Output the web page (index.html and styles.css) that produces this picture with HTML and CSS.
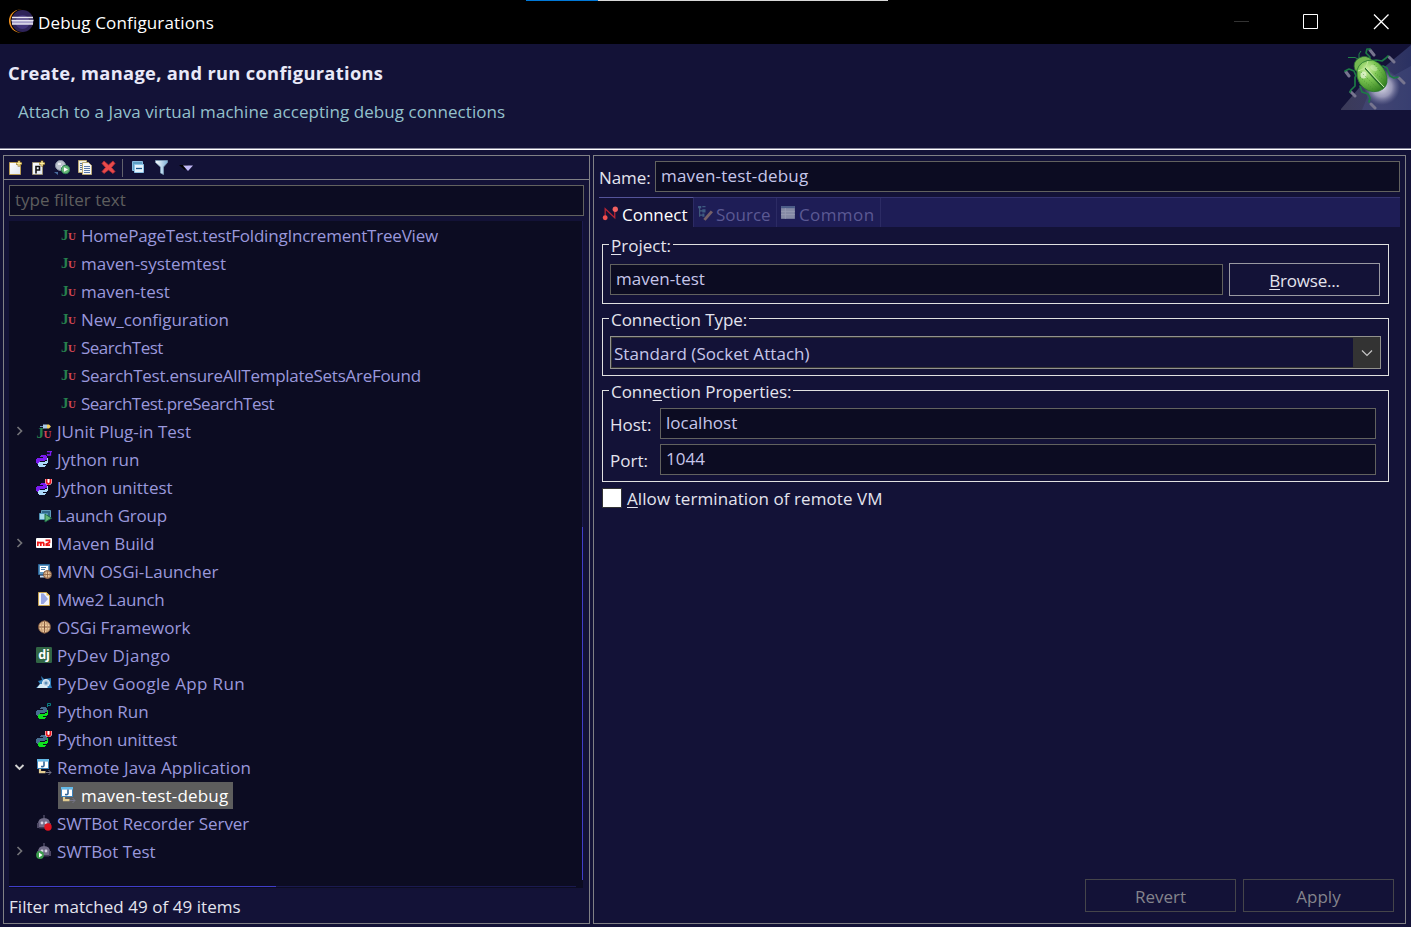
FILE: index.html
```html
<!DOCTYPE html>
<html lang="en">
<head>
<meta charset="utf-8">
<title>Debug Configurations</title>
<link rel="stylesheet" href="styles.css">
</head>
<body>
<svg width="0" height="0" class="defs" aria-hidden="true">
  <defs>
    <radialGradient id="gShell" cx=".35" cy=".3" r=".8"><stop offset="0" stop-color="#d2f2a4"/><stop offset=".4" stop-color="#7cc553"/><stop offset="1" stop-color="#2d7a1c"/></radialGradient>
    <radialGradient id="gGlow"><stop offset="0" stop-color="#dcdce8"/><stop offset=".55" stop-color="#a6a5c2" stop-opacity=".85"/><stop offset="1" stop-color="#7778a0" stop-opacity="0"/></radialGradient>
    <linearGradient id="gBeam" x1="0" x2="1"><stop offset="0" stop-color="#3b3a58"/><stop offset=".5" stop-color="#3a3b64"/><stop offset="1" stop-color="#2a3162"/></linearGradient>
    <linearGradient id="gPage" x2="1" y2="1"><stop offset="0" stop-color="#fff"/><stop offset="1" stop-color="#dfe6f2"/></linearGradient>
    <linearGradient id="gFun" x2="1"><stop offset="0" stop-color="#fff"/><stop offset="1" stop-color="#7fb2d9"/></linearGradient>
  </defs>
  <symbol id="snake" viewBox="0 0 16 16"><path d="M4 5h1V4h5v1h1v4H9v1H4v1H3v2H1v-1H0V8h1V7h6V6H4z" class="s-top"/><path d="M11 7h1v5h-1v1H7v1h3v1H9v1H3v-1H2v-3h1v-1h6v-1h2z" class="s-bot"/></symbol>
  <symbol id="launch" viewBox="0 0 16 16"><path d="M5.500 3.500h9v7h-9z" fill="#2f6688" stroke="#5f9bba"/><path d="M3.500 6.500h8v6h-8z" fill="#a5dced" stroke="#4d91b4"/><path d="M9 7l6.500 4.200L9 15z" fill="#64b878" stroke="#1d6f47"/></symbol>
  <symbol id="m2" viewBox="0 0 16 16"><rect y="3" width="16" height="10" rx="1" fill="#fff"/><path d="M1.800 11V6.500m0 1.100h2.500l.5.800V11m0-2.500.5-.9h2l.5.900V11M9.500 5.300h4v2.200L10.300 9v1.200H14" fill="none" stroke="#f01818" stroke-width="1.700"/></symbol>
  <symbol id="mvn" viewBox="0 0 16 16"><path d="M2.500 1.500h11v10h-11z" fill="#5b94bf" stroke="#296497"/><path d="M4 3h8v6H4z" fill="#fff"/><path d="M5 4.500h5M5 6.500h4" stroke="#4b7fac"/><path d="M4 12.500h5v2H4z" fill="#c4dcf2"/><circle cx="11.500" cy="11.500" r="4" fill="#edcda2" stroke="#754d36"/><path d="M7.800 11.500h7.400M11.500 8v7.500" stroke="#8b5d3d" stroke-width=".8"/><ellipse cx="11.500" cy="11.500" rx="2" ry="4" fill="none" stroke="#a67b58" stroke-width=".6"/></symbol>
  <symbol id="mwe" viewBox="0 0 16 16"><path d="M2.500 1.500h8l3 3v10h-11z" fill="#f3f5fb" stroke="#c7a34e"/><path d="M10.500 1.500v3h3z" fill="#e5b645"/><path d="M5 2.500h2.500L12 8l-4.500 5H5z" fill="#98a6e2"/></symbol>
  <symbol id="osgi" viewBox="0 0 16 16"><circle cx="8.500" cy="8" r="6" fill="#edcca0" stroke="#76513a"/><path d="M2.500 8h12M8.500 2v12" stroke="#80553a"/><ellipse cx="8.500" cy="8" rx="3.200" ry="6" fill="none" stroke="#bd916c" stroke-width=".8"/><path d="M3.500 5h10M3.500 11h10" stroke="#bd916c" stroke-width=".7"/></symbol>
  <symbol id="gae" viewBox="0 0 16 16"><path d="M5 1l3 3 7-1v7l1 3H0l4-4-2-3 4-1z" fill="#2f7fba"/><path d="M4 9h5l3 4H1z" fill="#d3e9f3"/><circle cx="10" cy="8" r="3.500" fill="#b9d1e5" stroke="#eef5fb"/><circle cx="10" cy="8" r="1.500" fill="#5d8fb6"/></symbol>
  <symbol id="rja" viewBox="0 0 16 16"><path d="M1 0h12v10H1z" fill="#3e83ba"/><path d="M1 0h12v2.500H1z" fill="#63b9e8"/><path d="M2 2.500h10v6.500H2z" fill="#fff"/><path d="M8 2.500v4q0 1.500-3 1" fill="none" stroke="#34679a" stroke-width="1.600"/><path d="M4 10v3.200h5.500" fill="none" stroke="#e2cc91" stroke-width="2.200"/><path d="M10 13.500h5M12.500 11l2.500 2.500-2.500 2.500" fill="none" stroke="#777789"/></symbol>
  <symbol id="bot" viewBox="0 0 16 16"><path d="M8 0v3" stroke="#6b6682"/><path d="M2 13V9q0-6 6-6t6 6v4z" fill="#726d89"/><path d="M1 8h2v5H1zM13 8h2v5h-2z" fill="#4c4763"/><circle cx="6" cy="8" r="1.400" fill="#d5d3e3"/><circle cx="10" cy="8" r="1.400" fill="#d5d3e3"/><path d="M3 12h10v1.500H3z" fill="#413b58"/></symbol>
  <symbol id="chev" viewBox="0 0 16 16"><path d="M5.500 4 9.500 8 5.500 12" fill="none" stroke="#737378" stroke-width="1.700"/></symbol>
  <symbol id="chevd" viewBox="0 0 16 16"><path d="M3.500 6 7.500 10 11.500 6" fill="none" stroke="#d2d2d2" stroke-width="1.900"/></symbol>
</svg>

<div class="window">
  <div class="load"><i class="load-a"></i><i class="load-b"></i></div>
  <header class="titlebar">
    <svg class="logo" viewBox="0 0 25 24"><circle cx="11.500" cy="12" r="11.500" fill="#f7941e"/><circle cx="13.500" cy="12" r="11.900" fill="#000"/><circle cx="13.500" cy="12" r="11" fill="#2e2359"/><circle cx="13.500" cy="13" r="7" fill="#43357c"/><path d="M3 13.500h21" stroke="#a69fca" stroke-width="3"/><path d="M3 8.500h21M2.500 11.500h22M3 15h21" stroke="#e6e4f0" stroke-width="1.400"/></svg>
    <h1>Debug Configurations</h1>
    <svg class="wc" viewBox="0 0 160 24"><path d="M1 11.500h15" stroke="#333"/><path d="M70.500 4.500h14v14h-14z" fill="none" stroke="#fff"/><path d="M141 4.500l14.500 14.500M155.500 4.500L141 19" stroke="#fff" stroke-width="1.300"/></svg>
  </header>

  <section class="banner">
    <div class="banner-text">
      <h2>Create, manage, and run configurations</h2>
      <p>Attach to a Java virtual machine accepting debug connections</p>
    </div>
    <svg class="bug" viewBox="0 0 70 66">
      <path d="M0 65 18 44 70 1v65H0z" fill="url(#gBeam)"/><path d="M21 66 30 44 70 22v44z" fill="#4a5082" opacity=".45"/>
      <circle cx="41" cy="43" r="18" fill="url(#gGlow)"/>
      <g stroke="#77758f" stroke-width="3" stroke-linecap="round"><path d="M29 6l4 5M48 13l5 5M58 34l5 5M5 28l3 4M10 48l4 4M30 60l4 4"/></g>
      <g fill="none" stroke="#1c7a45" stroke-width="1.700" stroke-linecap="round" stroke-linejoin="round"><path d="M28 16l1-3-4-4 1-4 3 0M30 17l5-1 6 1 4-3 2-2M42 22l4 2 3 8 4 2 4-1M15 32l-2-5-5-2-4 2M14 33v9l-4 4-1 2M19 42l2 6 6 2 2 4-1 4"/></g>
      <path d="M17 15l-3-1.500H7M18 14v-4l2-3" fill="none" stroke="#22824a"/>
      <path d="M14 26q-3-8 4-12 7-4 13 2L18 29z" fill="#74b851" stroke="#2a7134" stroke-width=".8"/>
      <path d="M16 26q3-10 16-10 12 5 14 18 1 10-8 13-11 3-19-7-4-6-3-14z" fill="url(#gShell)" stroke="#27762e" stroke-width=".8"/>
      <path d="M24 24 42 44" stroke="#236c25" stroke-width="1.600"/><path d="M25 24 43 43" stroke="#d9f4bd" stroke-width=".9"/>
      <path d="M17 27q3-1 7-3 2-3 3-7" fill="none" stroke="#c0e79b"/><ellipse cx="22.500" cy="31" rx="3" ry="3.500" fill="#f2fbe7" opacity=".65"/><ellipse cx="33" cy="24" rx="4" ry="2.500" fill="#e2f5cb" opacity=".4" transform="rotate(30 33 24)"/>
      <g fill="none" stroke="#3c8a2a" stroke-width=".8" stroke-dasharray=".8 2"><path d="M20 28l18 18M19 33l14 13M33 20l11 13M34 29l11 9"/></g>
    </svg>
  </section>

  <main class="panes">
    <section class="pane left">
      <div class="toolbar">
        <svg viewBox="0 0 16 16"><path d="M1.500 2.500h11v12h-11z" fill="url(#gPage)" stroke="#b99c54"/><path d="M11 .5v6M8 3.500h6" stroke="#8b6b20" stroke-width="2.600"/><path d="M11 1v5M8.500 3.500h5" stroke="#fff0a0" stroke-width="1.300"/></svg>
        <svg viewBox="0 0 16 16"><path d="M1.500 2.500h10v12h-10z" fill="url(#gPage)" stroke="#9b9175"/><path d="M5 13.500V6.500h3.500v3.500H5" fill="none" stroke="#111" stroke-width="1.600"/><path d="M11 .5v6M8 3.500h6" stroke="#8b6b20" stroke-width="2.600"/><path d="M11 1v5M8.500 3.500h5" stroke="#fff0a0" stroke-width="1.300"/></svg>
        <svg viewBox="0 0 16 16"><circle cx="6.500" cy="5.500" r="5" fill="#bdc3cd" stroke="#8b93a4"/><path d="M4 3h3v2H4zM7 6h3v2H7z" fill="#edf0f5"/><path d="M0 12h4v3z" fill="#496da0"/><circle cx="11.500" cy="9.500" r="4.200" fill="#69b878" stroke="#2d8055"/><path d="M10 7.200v4.600l4-2.300z" fill="#fff"/></svg>
        <svg viewBox="0 0 16 16"><path d="M1.500.5h8v12h-8z" fill="#f3f1e7" stroke="#b8a673"/><path d="M3 3.500h3M3 5.500h3M3 7.500h3M3 9.500h3" stroke="#5570a0"/><path d="M5.500 2.500h6l3 3v9h-9z" fill="#f8f8fa" stroke="#b8a673"/><path d="M7 6.500h6M7 8.500h6M7 10.500h6M7 12.500h6" stroke="#5a78ab"/></svg>
        <svg viewBox="0 0 16 16"><path d="M4 1 8.500 5 13 1 15 3.500 11.500 7.500 15 11.500 13 13.500 8.500 10 4 13.500 2 11.500 5.500 7.500 2 3.500z" fill="#e84b4b" stroke="#b32b35" stroke-width=".8"/></svg>
        <i class="sep"></i>
        <svg viewBox="0 0 16 16"><path d="M2.500 1.500h10v9h-10z" fill="#5f9fc5" stroke="#8abce0"/><path d="M4.500 4.500h9v8h-9z" fill="#e5f2fc" stroke="#8fc5e8"/><path d="M6 8.500h6" stroke="#17558c" stroke-width="1.300"/></svg>
        <svg viewBox="0 0 16 16"><path d="M2.500.5h12v2L10.500 7v7.500l-3-1.500V7l-5-4.500z" fill="url(#gFun)" stroke="#7c9cb6" stroke-width=".8"/></svg>
        <svg class="menu" viewBox="0 0 16 16"><path d="M0 5h9l-3 5z" fill="#000"/><path d="M4 5.500h10L9 11z" fill="#c2b8f5"/></svg>
      </div>
      <div class="field filter">type filter text</div>
      <div class="tree">
        <ul>
          <li class="l2"><svg class="ju"><text x="0" y="13" class="ju-j">J</text><text x="7" y="13" class="ju-u">U</text></svg><span class="n1">HomePageTest.testFoldingIncrementTreeView</span></li>
          <li class="l2"><svg class="ju"><text x="0" y="13" class="ju-j">J</text><text x="7" y="13" class="ju-u">U</text></svg><span>maven-systemtest</span></li>
          <li class="l2"><svg class="ju"><text x="0" y="13" class="ju-j">J</text><text x="7" y="13" class="ju-u">U</text></svg><span>maven-test</span></li>
          <li class="l2"><svg class="ju"><text x="0" y="13" class="ju-j">J</text><text x="7" y="13" class="ju-u">U</text></svg><span class="n0">New_configuration</span></li>
          <li class="l2"><svg class="ju"><text x="0" y="13" class="ju-j">J</text><text x="7" y="13" class="ju-u">U</text></svg><span class="n2">SearchTest</span></li>
          <li class="l2"><svg class="ju"><text x="0" y="13" class="ju-j">J</text><text x="7" y="13" class="ju-u">U</text></svg><span class="n1 n1b">SearchTest.ensureAllTemplateSetsAreFound</span></li>
          <li class="l2"><svg class="ju"><text x="0" y="13" class="ju-j">J</text><text x="7" y="13" class="ju-u">U</text></svg><span class="n2">SearchTest.preSearchTest</span></li>
          <li><svg class="tw"><use href="#chev"/></svg><svg class="ju"><text x="0.500" y="15" class="ju-j">J</text><text x="7.500" y="15" class="ju-u">U</text><path d="M4 3.500h5" stroke="#6d8fb6"/><path d="M7 1.500h4v4H7z" fill="#a9c9e6"/><path d="M11 1.500h2l2 2-2 2h-2z" fill="#f2d063"/></svg><span>JUnit Plug-in Test</span></li>
          <li><svg class="jy" viewBox="0 0 16 16"><use href="#snake"/><path d="M11 .5h5M14.500 0v4h-3V3" fill="none" stroke="#7b1cf0" stroke-width="1.300"/></svg><span>Jython run</span></li>
          <li><svg class="jy" viewBox="0 0 16 16"><use href="#snake"/><path d="M9 0h7v4l-2 2h-3L9 4z" fill="#fff"/><path d="M10.500 0v3.500q2 3 4 0V0" fill="none" stroke="#e8131c" stroke-width="1.900"/></svg><span>Jython unittest</span></li>
          <li><svg><use href="#launch"/></svg><span class="n1">Launch Group</span></li>
          <li><svg class="tw"><use href="#chev"/></svg><svg><use href="#m2"/></svg><span class="n0">Maven Build</span></li>
          <li><svg><use href="#mvn"/></svg><span>MVN OSGi-Launcher</span></li>
          <li><svg><use href="#mwe"/></svg><span class="n1">Mwe2 Launch</span></li>
          <li><svg><use href="#osgi"/></svg><span>OSGi Framework</span></li>
          <li><svg><rect width="16" height="16" rx="1.200" fill="#316645"/><text x="2.200" y="11.800" class="dj">dj</text></svg><span class="w2">PyDev Django</span></li>
          <li><svg><use href="#gae"/></svg><span class="w2">PyDev Google App Run</span></li>
          <li><svg class="py" viewBox="0 0 16 16"><use href="#snake"/><path d="M11.500 4V.5h3v2h-3" fill="none" stroke="#087f80"/></svg><span>Python Run</span></li>
          <li><svg class="py" viewBox="0 0 16 16"><use href="#snake"/><path d="M9 0h7v4l-2 2h-3L9 4z" fill="#fff"/><path d="M10.500 0v3.500q2 3 4 0V0" fill="none" stroke="#e8131c" stroke-width="1.900"/></svg><span class="n0">Python unittest</span></li>
          <li><svg class="tw"><use href="#chevd"/></svg><svg><use href="#rja"/></svg><span class="w0">Remote Java Application</span></li>
          <li class="l2 sel"><svg><use href="#rja"/></svg><span class="w1">maven-test-debug</span></li>
          <li><svg viewBox="0 0 16 16"><use href="#bot"/><circle cx="12" cy="12" r="3.700" fill="#e01420"/></svg><span class="n0">SWTBot Recorder Server</span></li>
          <li><svg class="tw"><use href="#chev"/></svg><svg viewBox="0 0 16 16"><use href="#bot"/><circle cx="4" cy="12" r="3.900" fill="#3a9a4c"/><path d="M3 9.500v5l3.500-2.500z" fill="#fff"/></svg><span class="n0">SWTBot Test</span></li>
        </ul>
        <i class="vbar"></i><i class="hbar"></i>
      </div>
      <p class="status">Filter matched 49 of 49 items</p>
    </section>

    <section class="pane right">
      <div class="name-row"><label>Name:</label><div class="field w1">maven-test-debug</div></div>
      <nav class="tabs">
        <div class="tab on"><svg viewBox="0 0 16 16"><path d="M3 12V3.500L12 12V3" fill="none" stroke="#b52434" stroke-width="1.200"/><circle cx="3" cy="12" r="2.300" fill="#f05050"/><circle cx="12.500" cy="4" r="2.500" fill="#f36060"/></svg><span>Connect</span></div>
        <div class="tab t2"><svg viewBox="0 0 16 16"><path d="M2.500 2v9M2.500 5.500h4M2.500 9.500h3" fill="none" stroke="#45617f"/><path d="M1 1h3v2H1zM5 1h3v1H5zM5 4h3v3H5zM5 8h2v3H5z" fill="#3f5b82"/><path d="M7 14l7-8" stroke="#766067" stroke-width="2.800"/></svg><span>Source</span></div>
        <div class="tab t3"><svg viewBox="0 0 16 16"><path d="M1 1h13v12H1z" fill="#858aa5"/><path d="M1 1h13v2H1z" fill="#4a5b87"/><path d="M1 6h13M1 9h13M5 3v10" stroke="#979bb2" stroke-width=".8"/></svg><span class="w3">Common</span></div>
      </nav>
      <fieldset class="g1"><legend><u>P</u>roject:</legend>
        <div class="row"><div class="field">maven-test</div><div class="btn n1"><span><u>B</u>rowse...</span></div></div>
      </fieldset>
      <fieldset class="g2"><legend class="n0">Connect<u>i</u>on Type:</legend>
        <div class="combo"><span>Standard (Socket Attach)</span><i><svg viewBox="0 0 12 8"><path d="M1 1.500 6 6.500l5-5" fill="none" stroke="#c6c6c6" stroke-width="1.200"/></svg></i></div>
      </fieldset>
      <fieldset class="g3"><legend class="n0">Conn<u>e</u>ction Properties:</legend>
        <div class="row"><label>Host:</label><div class="field">localhost</div></div>
        <div class="row"><label>Port:</label><div class="field">1044</div></div>
      </fieldset>
      <div class="check"><i></i><span><u>A</u>llow termination of remote VM</span></div>
      <div class="actions"><div class="btn off">Revert</div><div class="btn off">Apply</div></div>
    </section>
  </main>
</div>
</body>
</html>
```

FILE: styles.css
```css
* { box-sizing: border-box; margin: 0; padding: 0; }
body { background: #131237; overflow: hidden; font: 17px/26px "Open Sans", "Noto Sans", sans-serif; color: #e4e4ee; white-space: nowrap; }
.defs { position: absolute; }
.window { position: relative; width: 1411px; height: 927px; display: flex; flex-direction: column; }
.load { position: absolute; top: 0; left: 526px; display: flex; height: 1px; }
.load-a { width: 72px; background: #0078d7; }
.load-b { width: 290px; background: #d8d8d8; }
u { text-decoration-thickness: 1px; text-underline-offset: 2px; text-decoration-skip-ink: none; }

/* letter fitting */
.n0 { letter-spacing: -.06px; }
.n1 { letter-spacing: -.21px; }
.n1b { letter-spacing: -.27px; }
.n2 { letter-spacing: -.5px; }
.w0 { letter-spacing: .13px; }
.w1 { letter-spacing: .19px; }
.w2 { letter-spacing: .34px; }
.w3 { letter-spacing: .4px; }

.titlebar { height: 44px; background: #000; display: flex; align-items: center; padding: 0 18px 0 9px; }
.titlebar h1 { font-size: 17px; font-weight: 400; color: #fff; margin: 1px 0 0 4px; flex: 1; letter-spacing: .15px; }
.logo { width: 25px; height: 24px; margin-top: -3px; }
.wc { width: 160px; height: 24px; margin: -1px 0 0; }

.banner { height: 106px; display: flex; justify-content: space-between; border-bottom: 1px solid #fff; box-shadow: inset 0 -1px #85859b; }
.banner-text { padding: 16px 0 0 8px; }
.banner h2 { font-size: 18.300px; font-weight: 700; color: #e9e9f8; letter-spacing: .32px; }
.banner p { margin: 13px 0 0 10px; color: #93c1cc; letter-spacing: .06px; }
.bug { width: 70px; height: 66px; }

.panes { flex: 1; display: flex; gap: 3px; padding: 5px 5px 3px 3px; background: #131237; }
.pane { border: 1px solid #808085; display: flex; flex-direction: column; }
.left { width: 587px; }
.right { width: 813px; padding: 5px; }
.field { border: 1px solid #62625f; background: #0c0c22; height: 31px; line-height: 27px; padding-left: 5px; color: #c6c6ea; }
.field, .combo { flex-shrink: 0; }

.toolbar { height: 24px; border-bottom: 1px solid #808085; display: flex; align-items: center; gap: 7px; padding: 1px 0 0 4px; flex-shrink: 0; }
.toolbar svg { width: 16px; height: 16px; }
.sep { width: 1px; height: 18px; background: #62626c; margin: 0 1px 0 -1px; }
.toolbar .sep + svg { margin-left: -1px; }
.toolbar .menu { margin-left: 3px; }
.filter { margin: 5px 5px 0; color: #5e5e5e; }

.tree { position: relative; margin: 5px 6px 0 5px; height: 667px; background: #0c0c22; padding-top: 1px; }
.tree ul { list-style: none; color: #9a98dc; }
.tree li { display: flex; align-items: center; height: 28px; padding-left: 27px; }
.tree li.l2 { padding-left: 52px; }
.tree svg { width: 16px; height: 16px; margin: 0 5px 2px 0; flex-shrink: 0; }
.tree li.l2 svg { margin-right: 4px; }
.tree .tw { margin: 0 8px 2px -24px; }
.tree .sel { height: 27px; margin: 0 0 1px 49px; width: 175px; background: #5d5d5d; color: #fff; }
.tree li.sel { padding: 1px 0 0 2px; }
.tree li.sel svg { margin-right: 5px; }
.ju { overflow: visible; }
.ju-j, .ju-u { font: bold 15px "Liberation Serif", serif; fill: #26804d; }
.ju-u { font-size: 11px; fill: #d24553; }
.dj { font: bold 12.500px "Open Sans", sans-serif; fill: #fff; }
.s-top { fill: var(--top); }
.s-bot { fill: var(--bot); }
.jy { --top: #7b1cf0; --bot: #acd9fa; }
.py { --top: #476f91; --bot: #0ee41d; }
.vbar { position: absolute; right: 0; top: 0; width: 1px; height: 659px; background: linear-gradient(#1b1a50 306px, #403ecb 306px); }
.hbar { position: absolute; left: 0; bottom: 1px; height: 1px; width: 567px; background: linear-gradient(90deg, #403ecb 267px, #1b1a50 267px); }
.status { padding: 6px 0 0 5px; letter-spacing: .05px; }

.name-row { display: flex; }
.name-row label { width: 56px; padding-top: 4px; letter-spacing: -.1px; }
.name-row .field { flex: 1; }
.tabs { height: 30px; margin-top: 5px; background: #1e1d56; border-top: 1px solid #343370; display: flex; color: #5b5993; }
.tab { display: flex; align-items: center; width: 95px; border-right: 1px solid #2c2b64; padding: 4px 0 0 3px; }
.tab svg { width: 17px; height: 17px; margin: -3px 3px 0 0; }
.tab.on { color: #fff; background: #131237; margin-top: -1px; border-top: 1px solid #55549a; }
.tab.t2 { width: 83px; }
.tab.t2 svg { margin-right: 2px; }
.tab.t3 { width: 104px; }
.tab.t3 svg { margin-right: 2px; }

fieldset { border: 1px solid #e0e0e0; margin: 3px 11px 0 3px; padding: 0 8px 0 7px; min-width: 0; flex-shrink: 0; }
legend { padding: 0 2px; margin-left: -1px; height: 22px; }
.g1 { height: 71px; margin-top: 6px; }
.g1 .row { display: flex; gap: 6px; margin-top: 8px; }
.g1 .field { width: 613px; margin-top: 1px; }
.btn { border: 1px solid #9999a2; height: 33px; width: 151px; text-align: center; line-height: 33px; }
.g2 { height: 69px; padding-right: 7px; }
.combo { height: 33px; margin-top: 7px; border: 1px solid #92928d; box-shadow: inset 0 0 0 1px #333; display: flex; color: #c6c6ea; padding: 1px 0 1px 1px; line-height: 31px; }
.combo span { flex: 1; padding-left: 2px; letter-spacing: .05px; }
.combo i { width: 27px; background: #333; display: flex; align-items: center; justify-content: center; }
.combo svg { width: 12px; height: 8px; }
.g3 { height: 103px; padding-right: 12px; }
.g3 .row { display: flex; margin-top: 5px; }
.g3 legend + .row { margin-top: 7px; }
.g3 label { width: 50px; padding-top: 4px; height: 31px; }
.g3 .field { flex: 1; }
.check { display: flex; align-items: center; margin: 3px 0 0 3px; letter-spacing: .08px; }
.check i { width: 20px; height: 20px; background: #fff; border: 1px solid #333; margin: -2px 5px 0 0; }
.check span { padding-top: 1px; }
.actions { display: flex; justify-content: flex-end; gap: 7px; margin: auto 6px 6px 0; }
.btn.off { border-color: #45454a; color: #84848c; }
```
